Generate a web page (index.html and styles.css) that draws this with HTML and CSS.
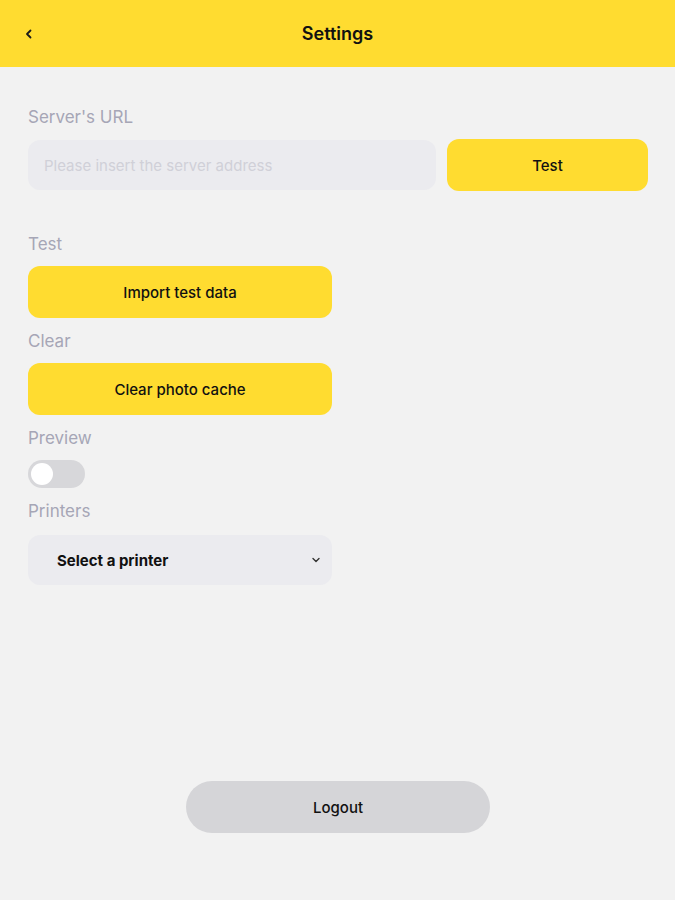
FILE: index.html
```html
<!DOCTYPE html>
<html>
<head>
<meta charset="utf-8">
<link rel="stylesheet" href="styles.css">
</head>
<body>
<div class="page">
  <header class="topbar">
    <span class="back">
      <svg width="12" height="12" viewBox="0 0 12 12"><path d="M7.5 2.5 L4 6 L7.5 9.5" fill="none" stroke="#1a1a1a" stroke-width="1.8" stroke-linecap="round" stroke-linejoin="round"/></svg>
    </span>
    <h1 class="title">Settings</h1>
  </header>
  <main class="content">
    <div class="label first">Server's URL</div>
    <div class="url-row">
      <div class="input">Please insert the server address</div>
      <button class="btn test-btn">Test</button>
    </div>
    <div class="label section">Test</div>
    <button class="btn wide">Import test data</button>
    <div class="label">Clear</div>
    <button class="btn wide">Clear photo cache</button>
    <div class="label">Preview</div>
    <div class="toggle"><span class="knob"></span></div>
    <div class="label">Printers</div>
    <div class="select">
      <span>Select a printer</span>
      <svg width="12" height="12" viewBox="0 0 12 12"><path d="M3 4.5 L6 7.5 L9 4.5" fill="none" stroke="#333" stroke-width="1.4" stroke-linecap="round" stroke-linejoin="round"/></svg>
    </div>
  </main>
  <div class="footer">
    <button class="logout">Logout</button>
  </div>
</div>
</body>
</html>
```
FILE: styles.css
```css
* { box-sizing: border-box; }
html, body { margin: 0; padding: 0; }
body {
  background: #f2f2f2;
  font-family: Inter, "Noto Sans", sans-serif;
  color: #111;
}
.page {
  height: 900px;
  display: flex;
  flex-direction: column;
}
.topbar {
  height: 67px;
  background: #ffdc30;
  display: flex;
  align-items: center;
  justify-content: center;
  position: relative;
}
.back {
  position: absolute;
  left: 23px;
  top: 28px;
  display: flex;
}
.title {
  margin: 0;
  font-size: 18px;
  font-weight: 600;
  color: #111;
}
.content {
  padding: 0 27px 0 28px;
  display: flex;
  flex-direction: column;
  align-items: flex-start;
}
.label {
  font-size: 17px;
  line-height: 22px;
  color: #a6a6b6;
  margin-top: 12px;
  margin-bottom: 11px;
}
.label.first { margin-top: 39px; }
.label.section { margin-top: 42px; }
.url-row {
  display: flex;
  align-items: center;
  gap: 11px;
  width: 100%;
}
.input {
  flex: 1;
  height: 50px;
  background: #ebebef;
  border-radius: 12px;
  display: flex;
  align-items: center;
  padding-left: 16px;
  font-size: 15px;
  color: #d0d0d8;
}
.btn {
  border: none;
  background: #ffdc30;
  border-radius: 12px;
  font-family: inherit;
  font-size: 15px;
  font-weight: 500;
  color: #111;
  height: 52px;
}
.test-btn { width: 201px; }
.wide { width: 304px; }
.toggle {
  width: 57px;
  height: 28px;
  border-radius: 14px;
  background: #d7d7da;
  display: flex;
  align-items: center;
  padding-left: 3px;
}
.knob {
  width: 22px;
  height: 22px;
  border-radius: 50%;
  background: #fff;
}
.select {
  width: 304px;
  height: 50px;
  background: #ebebef;
  border-radius: 12px;
  display: flex;
  align-items: center;
  justify-content: space-between;
  padding: 0 10px 0 29px;
  font-size: 15px;
  font-weight: 700;
  color: #111;
  margin-top: 2px;
}
.footer {
  margin-top: auto;
  margin-bottom: 67px;
  display: flex;
  justify-content: center;
  padding-left: 1px;
}
.logout {
  width: 304px;
  height: 52px;
  border: none;
  border-radius: 26px;
  background: #d5d5d8;
  font-family: inherit;
  font-size: 15px;
  font-weight: 500;
  color: #111;
}
```
